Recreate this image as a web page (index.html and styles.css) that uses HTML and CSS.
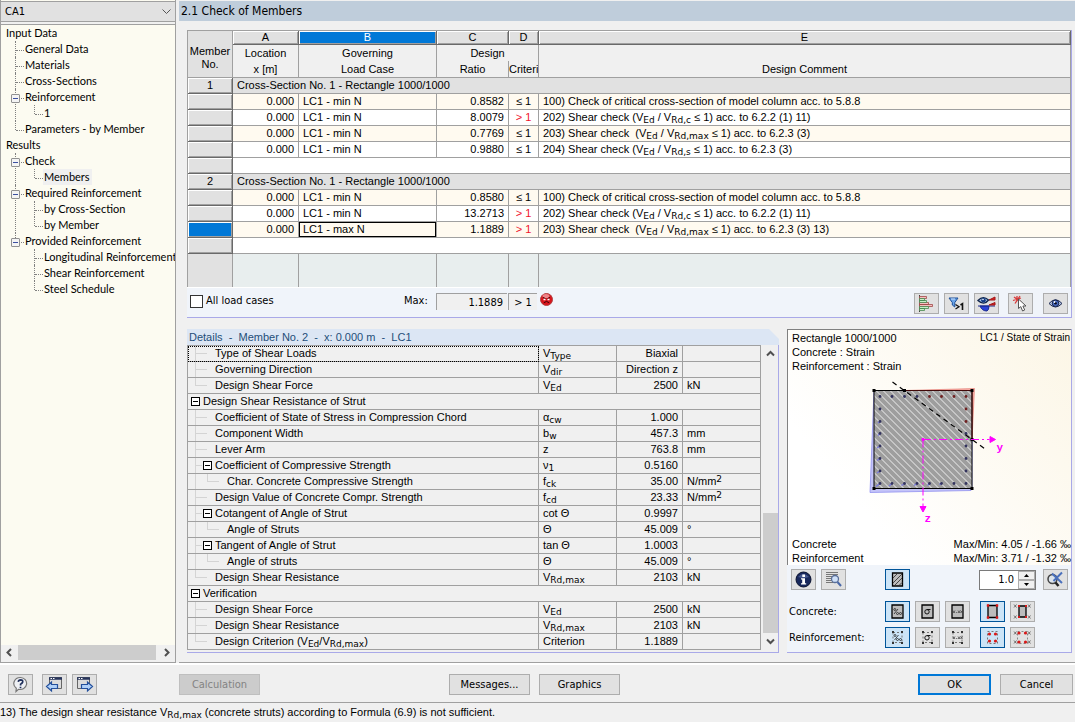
FILE: index.html
```
<!-- index.html -->
<!DOCTYPE html>
<html lang="en">
  <head>
    <meta charset="utf-8" />
    <title>2.1 Check of Members</title>
    <link rel="stylesheet" href="styles.css" />
  </head>
  <body>
    <div class="workspace">
      <aside class="sidebar">
        <div class="case-select">
          <select aria-label="Design case">
            <option>CA1</option>
          </select>
          <svg class="chevron" width="9" height="6" viewBox="0 0 9 6"><path d="M0.5 0.5 L4.5 4.5 L8.5 0.5" fill="none" stroke="#555" /></svg>
        </div>
        <nav class="tree">
          <ul class="tree-root">
            <li>
              <a href="#">Input Data</a>
              <ul>
                <li><a href="#">General Data</a></li>
                <li><a href="#">Materials</a></li>
                <li><a href="#">Cross-Sections</a></li>
                <li>
                  <button class="toggle" aria-label="Collapse"></button><a href="#">Reinforcement</a>
                  <ul>
                    <li><a href="#">1</a></li>
                  </ul>
                </li>
                <li><a href="#">Parameters - by Member</a></li>
              </ul>
            </li>
            <li>
              <a href="#">Results</a>
              <ul>
                <li>
                  <button class="toggle" aria-label="Collapse"></button><a href="#">Check</a>
                  <ul>
                    <li><a class="selected" href="#">Members</a></li>
                  </ul>
                </li>
                <li>
                  <button class="toggle" aria-label="Collapse"></button><a href="#">Required Reinforcement</a>
                  <ul>
                    <li><a href="#">by Cross-Section</a></li>
                    <li><a href="#">by Member</a></li>
                  </ul>
                </li>
                <li>
                  <button class="toggle" aria-label="Collapse"></button><a href="#">Provided Reinforcement</a>
                  <ul>
                    <li><a href="#">Longitudinal Reinforcement</a></li>
                    <li><a href="#">Shear Reinforcement</a></li>
                    <li><a href="#">Steel Schedule</a></li>
                  </ul>
                </li>
              </ul>
            </li>
          </ul>
        </nav>
        <div class="hscroll">
          <button aria-label="Scroll left"><svg width="7" height="9" viewBox="0 0 7 9"><path d="M5 1 L1.5 4.5 L5 8" fill="none" stroke="#505050" stroke-width="2" /></svg></button>
          <div class="hthumb"></div>
          <button aria-label="Scroll right"><svg width="7" height="9" viewBox="0 0 7 9"><path d="M2 1 L5.5 4.5 L2 8" fill="none" stroke="#505050" stroke-width="2" /></svg></button>
        </div>
      </aside>

      <main class="main">
        <h1 class="title">2.1 Check of Members</h1>
        <div class="content">
          <section class="card">
            <table class="members">
              <colgroup>
                <col class="c-no" />
                <col class="c-a" />
                <col class="c-b" />
                <col class="c-c" />
                <col class="c-d" />
                <col />
              </colgroup>
              <thead>
                <tr class="letters">
                  <th class="corner" rowspan="3">Member<br />No.</th>
                  <th>A</th>
                  <th class="active">B</th>
                  <th>C</th>
                  <th>D</th>
                  <th>E</th>
                </tr>
                <tr class="top">
                  <th>Location</th>
                  <th>Governing</th>
                  <th colspan="2">Design</th>
                  <th></th>
                </tr>
                <tr class="names">
                  <th>x [m]</th>
                  <th>Load Case</th>
                  <th>Ratio</th>
                  <th>Criteri</th>
                  <th>Design Comment</th>
                </tr>
              </thead>
              <tbody>
                <tr class="group">
                  <th>1</th>
                  <td colspan="5">Cross-Section No. 1 - Rectangle 1000/1000</td>
                </tr>
                <tr class="odd">
                  <th></th>
                  <td class="num">0.000</td>
                  <td>LC1 - min N</td>
                  <td class="num">0.8582</td>
                  <td class="crit">≤ 1</td>
                  <td>100) Check of critical cross-section of model column acc. to 5.8.8</td>
                </tr>
                <tr>
                  <th></th>
                  <td class="num">0.000</td>
                  <td>LC1 - min N</td>
                  <td class="num">8.0079</td>
                  <td class="crit bad">&gt; 1</td>
                  <td>202) Shear check (V<sub>Ed</sub> / V<sub>Rd,c</sub> ≤ 1) acc. to 6.2.2 (1) 11)</td>
                </tr>
                <tr class="odd">
                  <th></th>
                  <td class="num">0.000</td>
                  <td>LC1 - min N</td>
                  <td class="num">0.7769</td>
                  <td class="crit">≤ 1</td>
                  <td>203) Shear check &nbsp;(V<sub>Ed</sub> / V<sub>Rd,max</sub> ≤ 1) acc. to 6.2.3 (3)</td>
                </tr>
                <tr>
                  <th></th>
                  <td class="num">0.000</td>
                  <td>LC1 - min N</td>
                  <td class="num">0.9880</td>
                  <td class="crit">≤ 1</td>
                  <td>204) Shear check (V<sub>Ed</sub> / V<sub>Rd,s</sub> ≤ 1) acc. to 6.2.3 (3)</td>
                </tr>
                <tr>
                  <th></th>
                  <td colspan="5"></td>
                </tr>
                <tr class="group">
                  <th>2</th>
                  <td colspan="5">Cross-Section No. 1 - Rectangle 1000/1000</td>
                </tr>
                <tr class="odd">
                  <th></th>
                  <td class="num">0.000</td>
                  <td>LC1 - min N</td>
                  <td class="num">0.8580</td>
                  <td class="crit">≤ 1</td>
                  <td>100) Check of critical cross-section of model column acc. to 5.8.8</td>
                </tr>
                <tr>
                  <th></th>
                  <td class="num">0.000</td>
                  <td>LC1 - min N</td>
                  <td class="num">13.2713</td>
                  <td class="crit bad">&gt; 1</td>
                  <td>202) Shear check (V<sub>Ed</sub> / V<sub>Rd,c</sub> ≤ 1) acc. to 6.2.2 (1) 11)</td>
                </tr>
                <tr class="odd">
                  <th class="active"></th>
                  <td class="num">0.000</td>
                  <td class="focused">LC1 - max N</td>
                  <td class="num">1.1889</td>
                  <td class="crit bad">&gt; 1</td>
                  <td>203) Shear check &nbsp;(V<sub>Ed</sub> / V<sub>Rd,max</sub> ≤ 1) acc. to 6.2.3 (3) 13)</td>
                </tr>
                <tr>
                  <th></th>
                  <td colspan="5"></td>
                </tr>
                <tr class="filler">
                  <td></td>
                  <td></td>
                  <td></td>
                  <td></td>
                  <td></td>
                  <td></td>
                </tr>
              </tbody>
            </table>
            <div class="summary">
              <label class="check"><input type="checkbox" />All load cases</label>
              <label class="max-label" for="maxRatio">Max:</label>
              <input class="field max-field" id="maxRatio" type="text" value="1.1889" readonly />
              <input class="field crit-field" type="text" value="&gt; 1" aria-label="Criterion" readonly />
              <svg class="sad" width="13" height="13" viewBox="0 0 13 13">
                <circle cx="6.5" cy="6.5" r="6" fill="#d8141c" stroke="#b04040" />
                <ellipse cx="6" cy="3" rx="3.5" ry="2" fill="#ee8488" />
                <path d="M3 4.5 L5.5 5.5 M10 4.5 L7.5 5.5 M3.8 9.8 Q6.5 7 9.2 9.8" fill="none" stroke="#3a0508" />
                <path d="M3.5 6.5h2M7.5 6.5h2" stroke="#fff" stroke-width="1.5" />
              </svg>
              <div class="tools">
                <button class="icon-btn" aria-label="Result diagrams">
                  <svg width="17" height="17" viewBox="0 0 17 17">
                    <path d="M1.5 0v17" stroke="#444" />
                    <g fill="#f6c0c0" stroke="#a04848" stroke-width="0.8"><path d="M1.5 1.5h7v2h-7zM1.5 7.5h9v2h-9zM1.5 9.5h13v2h-13z" /></g>
                    <g fill="#c6f0c8" stroke="#4a8850" stroke-width="0.8"><path d="M1.5 3.5h5v2h-5zM1.5 5.5h7v2h-7zM1.5 11.5h9v2h-9zM1.5 13.5h5v2h-5z" /></g>
                  </svg>
                </button>
                <button class="icon-btn" aria-label="Filter ratio above 1">
                  <svg width="17" height="17" viewBox="0 0 17 17">
                    <path d="M1 3h9L6.8 7.5V12L4.3 10V7.5z" fill="#6aa4e8" stroke="#1c4f98" />
                    <path d="M3 4h4" stroke="#cfe4ff" />
                    <path d="M7.5 9.5L11 11.8L7.5 14" fill="none" stroke="#111" stroke-width="1.3" />
                    <path d="M12.5 10L14.5 8.7V15" fill="none" stroke="#111" stroke-width="1.6" />
                  </svg>
                </button>
                <button class="icon-btn" aria-label="Show results">
                  <svg width="19" height="17" viewBox="0 0 19 17">
                    <path d="M1 11h17M3 11Q5 16 10 16Q12 15 12 11z" fill="#2b42d8" stroke="#1a2a90" />
                    <path d="M12 5L18 2V5zM12 10L18 7.5V10z" fill="#e02020" stroke="#a01818" />
                    <path d="M1 5.5Q6 0 11.5 5Q7 11 1 5.5z" fill="#a9c8ec" stroke="#12264c" stroke-width="1.4" />
                    <circle cx="6.5" cy="5.3" r="2.3" fill="#123a84" />
                    <circle cx="6" cy="4.5" r="0.8" fill="#fff" />
                  </svg>
                </button>
                <button class="icon-btn pick" aria-label="Pick member">
                  <svg width="17" height="17" viewBox="0 0 17 17">
                    <path d="M2 2L9 7M1 5.5L9 3M8 1L3 8.5M5 1V6" stroke="#d83a3a" stroke-width="1.3" />
                    <path d="M6.5 4V13.5L8.8 11.6L10.6 16L12.7 15L10.9 11H14z" fill="#fff" stroke="#555" />
                  </svg>
                </button>
                <button class="icon-btn view-btn" aria-label="View mode">
                  <svg width="15" height="11" viewBox="0 0 15 11">
                    <path d="M1 5.5Q7.5 -2 14 5.5Q7.5 12.5 1 5.5z" fill="#b4c4e4" stroke="#1c2850" />
                    <circle cx="7.5" cy="5.3" r="3.3" fill="#4a6cc4" stroke="#14224a" />
                    <circle cx="7.5" cy="5.3" r="1.3" fill="#05081a" />
                    <circle cx="6.5" cy="4" r="0.9" fill="#fff" />
                  </svg>
                </button>
              </div>
            </div>
          </section>

          <div class="lower">
            <section class="details">
              <h2 class="details-title">Details &nbsp;- &nbsp;Member No. 2 &nbsp;- &nbsp;x: 0.000 m &nbsp;- &nbsp;LC1</h2>
              <div class="details-body">
                <table class="props">
                  <colgroup>
                    <col />
                    <col class="p-sym" />
                    <col class="p-val" />
                    <col class="p-unit" />
                  </colgroup>
                  <tbody>
                    <tr class="current"><td><div><i class="g mid"></i><i class="g end"></i>Type of Shear Loads</div></td><td>V<sub>Type</sub></td><td>Biaxial</td><td></td></tr>
                    <tr><td><div><i class="g mid"></i><i class="g end"></i>Governing Direction</div></td><td>V<sub>dir</sub></td><td>Direction z</td><td></td></tr>
                    <tr><td><div><i class="g last"></i><i class="g end"></i>Design Shear Force</div></td><td>V<sub>Ed</sub></td><td>2500</td><td>kN</td></tr>
                    <tr><td colspan="4"><div><button class="g box" aria-label="Collapse"></button>Design Shear Resistance of Strut</div></td></tr>
                    <tr><td><div><i class="g mid"></i><i class="g end"></i>Coefficient of State of Stress in Compression Chord</div></td><td>α<sub>cw</sub></td><td>1.000</td><td></td></tr>
                    <tr><td><div><i class="g mid"></i><i class="g end"></i>Component Width</div></td><td>b<sub>w</sub></td><td>457.3</td><td>mm</td></tr>
                    <tr><td><div><i class="g mid"></i><i class="g end"></i>Lever Arm</div></td><td>z</td><td>763.8</td><td>mm</td></tr>
                    <tr><td><div><i class="g mid"></i><button class="g box" aria-label="Collapse"></button>Coefficient of Compressive Strength</div></td><td>ν<sub>1</sub></td><td>0.5160</td><td></td></tr>
                    <tr><td><div><i class="g bar"></i><i class="g last"></i><i class="g end"></i>Char. Concrete Compressive Strength</div></td><td>f<sub>ck</sub></td><td>35.00</td><td>N/mm<sup>2</sup></td></tr>
                    <tr><td><div><i class="g mid"></i><i class="g end"></i>Design Value of Concrete Compr. Strength</div></td><td>f<sub>cd</sub></td><td>23.33</td><td>N/mm<sup>2</sup></td></tr>
                    <tr><td><div><i class="g mid"></i><button class="g box" aria-label="Collapse"></button>Cotangent of Angle of Strut</div></td><td>cot Θ</td><td>0.9997</td><td></td></tr>
                    <tr><td><div><i class="g bar"></i><i class="g last"></i><i class="g end"></i>Angle of Struts</div></td><td>Θ</td><td>45.009</td><td>°</td></tr>
                    <tr><td><div><i class="g mid"></i><button class="g box" aria-label="Collapse"></button>Tangent of Angle of Strut</div></td><td>tan Θ</td><td>1.0003</td><td></td></tr>
                    <tr><td><div><i class="g bar"></i><i class="g last"></i><i class="g end"></i>Angle of struts</div></td><td>Θ</td><td>45.009</td><td>°</td></tr>
                    <tr><td><div><i class="g last"></i><i class="g end"></i>Design Shear Resistance</div></td><td>V<sub>Rd,max</sub></td><td>2103</td><td>kN</td></tr>
                    <tr><td colspan="4"><div><button class="g box" aria-label="Collapse"></button>Verification</div></td></tr>
                    <tr><td><div><i class="g mid"></i><i class="g end"></i>Design Shear Force</div></td><td>V<sub>Ed</sub></td><td>2500</td><td>kN</td></tr>
                    <tr><td><div><i class="g mid"></i><i class="g end"></i>Design Shear Resistance</div></td><td>V<sub>Rd,max</sub></td><td>2103</td><td>kN</td></tr>
                    <tr><td><div><i class="g last"></i><i class="g end"></i><span>Design Criterion (V<sub>Ed</sub>/V<sub>Rd,max</sub>)</span></div></td><td>Criterion</td><td>1.1889</td><td></td></tr>
                  </tbody>
                </table>
                <div class="vscroll">
                  <button aria-label="Scroll up"><svg width="9" height="7" viewBox="0 0 9 7"><path d="M1 5.5 L4.5 2 L8 5.5" fill="none" stroke="#505050" stroke-width="2" /></svg></button>
                  <div class="vthumb"></div>
                  <button aria-label="Scroll down"><svg width="9" height="7" viewBox="0 0 9 7"><path d="M1 1.5 L4.5 5 L8 1.5" fill="none" stroke="#505050" stroke-width="2" /></svg></button>
                </div>
              </div>
            </section>

            <section class="graphic">
              <div class="view">
                <div class="view-head">
                  <div>Rectangle 1000/1000<br />Concrete : Strain<br />Reinforcement : Strain</div>
                  <div class="small">LC1 / State of Strain</div>
                </div>
                <svg class="section" viewBox="0 0 282 164">
                  <defs>
                    <pattern id="hatch" width="7" height="7" patternUnits="userSpaceOnUse">
                      <rect width="7" height="7" fill="#9e9e9e" />
                      <path d="M-1 -1L8 8M6 -1L8 1M-1 6L1 8" stroke="#eee" />
                    </pattern>
                  </defs>
                  <path d="M116 17.5H85.5L81.5 119.5L182.5 117.5L183.5 66.5V115.5H85.5" fill="#c4c4f8" stroke="#9090f0" stroke-width="0.8" />
                  <path d="M116 17.5L186 15.5L183.5 66.5V17.5z" fill="#f8b0a8" stroke="#e07068" stroke-width="0.6" />
                  <rect x="85.5" y="17.5" width="98" height="98" fill="url(#hatch)" stroke="#000" />
                  <path d="M116 17.5H183.5V66.5" fill="none" stroke="#400808" />
                  <g stroke="#7c7ce0" stroke-width="1.5">
                    <path d="M91.5 48.5l-2 1.5M91.5 60.5l-2 2M91.5 73l-3 2M91.5 85.5l-3 2M91.5 98l-3 2M91.5 110.5l-4 3M103.5 110.5l-3 2.5M116 110.5l-3 2M128.5 110.5l-3 2M141 110.5l-2 2M153 110.5l-2 1" />
                  </g>
                  <!-- reinforcement bars -->
                  <g fill="#33335e">
                    <circle cx="91.5" cy="23.5" r="1.4" /><circle cx="103.5" cy="23.5" r="1.4" /><circle cx="116" cy="23.5" r="1.4" /><circle cx="128.5" cy="23.5" r="1.4" />
                    <circle cx="91.5" cy="36" r="1.4" /><circle cx="91.5" cy="48.5" r="1.4" /><circle cx="91.5" cy="60.5" r="1.4" /><circle cx="91.5" cy="73" r="1.4" /><circle cx="91.5" cy="85.5" r="1.4" /><circle cx="91.5" cy="98" r="1.4" />
                    <circle cx="91.5" cy="110.5" r="1.4" /><circle cx="103.5" cy="110.5" r="1.4" /><circle cx="116" cy="110.5" r="1.4" /><circle cx="128.5" cy="110.5" r="1.4" /><circle cx="141" cy="110.5" r="1.4" /><circle cx="153" cy="110.5" r="1.4" /><circle cx="165.5" cy="110.5" r="1.4" /><circle cx="177.5" cy="110.5" r="1.4" />
                    <circle cx="177.5" cy="60.5" r="1.4" /><circle cx="177.5" cy="73" r="1.4" /><circle cx="177.5" cy="85.5" r="1.4" /><circle cx="177.5" cy="98" r="1.4" />
                  </g>
                  <g fill="#702020">
                    <circle cx="141" cy="23.5" r="1.4" /><circle cx="153" cy="23.5" r="1.4" /><circle cx="165.5" cy="23.5" r="1.4" /><circle cx="177.5" cy="23.5" r="1.4" /><circle cx="177.5" cy="36" r="1.4" /><circle cx="177.5" cy="48.5" r="1.4" />
                  </g>
                  <path d="M84 16h3v3h-3zM182 16h3v3h-3zM84 114h3v3h-3zM182 114h3v3h-3zM114.5 16h3v3h-3zM182 65h3v3h-3z" />
                  <path d="M104 9L198 77" stroke="#000" stroke-width="1.2" stroke-dasharray="5 4" />
                  <g stroke="#f0f" fill="#f0f">
                    <path d="M134.5 66.5H201M134.5 66.5V133" stroke-dasharray="8 3 2 3" />
                    <path d="M201.5 63.5V69.5L207 66.5zM131.5 133.5H137.5L134.5 139z" />
                    <path d="M133.5 65.5h2v2h-2z" />
                  </g>
                  <text x="208" y="78">y</text>
                  <text x="136" y="149">z</text>
                </svg>
                <div class="view-foot">
                  <div>Concrete<br />Reinforcement</div>
                  <div>Max/Min: 4.05 / -1.66 ‰<br />Max/Min: 3.71 / -1.32 ‰</div>
                </div>
              </div>
              <div class="controls">
                <div class="control-row first">
                  <div class="lead">
                    <button class="icon-btn" aria-label="Info">
                      <svg width="17" height="17" viewBox="0 0 17 17">
                        <circle cx="8.5" cy="8.5" r="7.5" fill="#18285c" stroke="#0a1230" />
                        <path d="M3 6Q8.5 0 14 6Q8.5 8 3 6z" fill="#5a6ca4" opacity="0.7" />
                        <path d="M7.3 3.5h2.7v2.5h-2.7zM6 7.2h4v5h1.2v1.3H6v-1.3h1.2v-3.7H6z" fill="#fff" />
                      </svg>
                    </button>
                    <button class="icon-btn" aria-label="Find in list">
                      <svg width="19" height="17" viewBox="0 0 19 17">
                        <path d="M2 1.5h12M2 3.5h12M2 5.5h6M2 7.5h5M2 9.5h6M2 11.5h7" stroke="#777" />
                        <circle cx="11" cy="8" r="3.5" fill="#cfe0f8" stroke="#5a6f98" stroke-width="1.3" />
                        <path d="M13.5 11L17 15" stroke="#4a68a8" stroke-width="2" />
                      </svg>
                    </button>
                  </div>
                  <button class="icon-btn on" aria-label="Hatching">
                    <svg width="15" height="15" viewBox="0 0 15 15">
                      <path d="M2.5 1h10v13h-10z" fill="#bcbcbc" stroke="#000" stroke-width="1.3" />
                      <path d="M3 6L7 2M3 11L12 2M5 13L12 6M9.5 13L12 10.5" stroke="#444" />
                    </svg>
                  </button>
                  <div class="spinner">
                    <input type="text" value="1.0" aria-label="Scale" />
                    <div class="spin-btns">
                      <button aria-label="Increase"><svg width="5" height="3" viewBox="0 0 5 3"><path d="M0 3L2.5 0L5 3z" /></svg></button>
                      <button aria-label="Decrease"><svg width="5" height="3" viewBox="0 0 5 3"><path d="M0 0L2.5 3L5 0z" /></svg></button>
                    </div>
                  </div>
                  <button class="icon-btn zoom-btn" aria-label="Reset zoom">
                    <svg width="19" height="17" viewBox="0 0 19 17">
                      <circle cx="6.5" cy="8" r="4.5" fill="#dce4ec" stroke="#444" stroke-width="1.5" />
                      <path d="M9.5 11.5L12.5 15" stroke="#222" stroke-width="2.5" />
                      <path d="M6 2.5L16 12M16 1.5L7.5 10" stroke="#4a70bc" stroke-width="2" />
                    </svg>
                  </button>
                </div>

                <div class="control-row">
                  <div class="lead">Concrete:</div>
                  <button class="icon-btn on" aria-label="Concrete strain">
                    <svg width="15" height="15" viewBox="0 0 15 15">
                      <path d="M2 1h11v13H2z" fill="#bcbcbc" stroke="#000" stroke-width="1.3" />
                      <circle cx="4.8" cy="5.5" r="1" fill="none" stroke="#222" stroke-width="0.8" /><circle cx="7.5" cy="9.5" r="1" fill="none" stroke="#222" stroke-width="0.8" /><circle cx="10.5" cy="9.5" r="1" fill="none" stroke="#222" stroke-width="0.8" />
                      <path d="M4 10L8 5" stroke="#222" stroke-width="0.8" />
                    </svg>
                  </button>
                  <button class="icon-btn" aria-label="Concrete stress">
                    <svg width="15" height="15" viewBox="0 0 15 15">
                      <path d="M2 1h11v13H2z" fill="#bcbcbc" stroke="#000" stroke-width="1.3" />
                      <path d="M7 5.5H10.5" stroke="#111" /><circle cx="7" cy="7.8" r="2.2" fill="none" stroke="#111" />
                    </svg>
                  </button>
                  <button class="icon-btn" aria-label="Concrete values">
                    <svg width="15" height="15" viewBox="0 0 15 15">
                      <path d="M2 1h11v13H2z" fill="#bcbcbc" stroke="#000" stroke-width="1.3" />
                      <path d="M3 6.5l2 2.5M5 6.5L3 9M6.2 8.5h1M8 6.5l2 2.5M10 6.5L8 9M10.5 6.5l2 2.5M12.5 6.5l-2 2.5" stroke="#444" stroke-width="0.8" />
                    </svg>
                  </button>
                  <button class="icon-btn on wide-gap" aria-label="Concrete corner points">
                    <svg width="15" height="17" viewBox="0 0 15 17">
                      <path d="M3 2.5h9v12H3z" fill="#bcbcbc" stroke="#000" stroke-width="1.3" />
                      <path d="M2 1.5h2v2H2zM11 1.5h2v2h-2zM2 13.5h2v2H2zM11 13.5h2v2h-2z" fill="#d81818" stroke="#d81818" stroke-width="0.5" />
                    </svg>
                  </button>
                  <button class="icon-btn" aria-label="Concrete corner values">
                    <svg width="19" height="17" viewBox="0 0 19 17">
                      <path d="M6 3h7v11H6z" fill="#bcbcbc" stroke="#000" stroke-width="1.3" />
                      <path d="M5 2h2v2H5zM12 2h2v2h-2zM5 13h2v2H5zM12 13h2v2h-2z" fill="#d81818" />
                      <path d="M1 1.5l2.5 3M3.5 1.5l-2.5 3M15 1.5l2.5 3M17.5 1.5l-2.5 3M1 12.5l2.5 3M3.5 12.5l-2.5 3M15 12.5l2.5 3M17.5 12.5l-2.5 3" stroke="#555" stroke-width="0.8" />
                    </svg>
                  </button>
                </div>

                <div class="control-row">
                  <div class="lead">Reinforcement:</div>
                  <button class="icon-btn on" aria-label="Reinforcement strain">
                    <svg width="15" height="15" viewBox="0 0 15 15">
                      <path d="M3 2.5h9v10H3z" fill="none" stroke="#777" stroke-dasharray="2 2" />
                      <path d="M2 1h2v2H2zM11 1h2v2h-2zM2 12h2v2H2zM11 12h2v2h-2z" fill="#333" />
                      <circle cx="5" cy="5.5" r="1" fill="none" stroke="#222" stroke-width="0.8" /><circle cx="7.5" cy="9.5" r="1" fill="none" stroke="#222" stroke-width="0.8" /><circle cx="10.5" cy="9.5" r="1" fill="none" stroke="#222" stroke-width="0.8" />
                      <path d="M4.5 10L8.5 5" stroke="#222" stroke-width="0.8" />
                    </svg>
                  </button>
                  <button class="icon-btn" aria-label="Reinforcement stress">
                    <svg width="15" height="15" viewBox="0 0 15 15">
                      <path d="M3 2.5h9v10H3z" fill="none" stroke="#777" stroke-dasharray="2 2" />
                      <path d="M2 1h2v2H2zM11 1h2v2h-2zM2 12h2v2H2zM11 12h2v2h-2z" fill="#333" />
                      <path d="M7 5.5H10.5" stroke="#111" /><circle cx="7" cy="7.8" r="2.2" fill="none" stroke="#111" />
                    </svg>
                  </button>
                  <button class="icon-btn" aria-label="Reinforcement values">
                    <svg width="15" height="15" viewBox="0 0 15 15">
                      <path d="M3 2.5h9v10H3z" fill="none" stroke="#777" stroke-dasharray="2 2" />
                      <path d="M2 1h2v2H2zM11 1h2v2h-2zM2 12h2v2H2zM11 12h2v2h-2z" fill="#333" />
                      <path d="M3 6.5l2 2.5M5 6.5L3 9M6.2 8.5h1M8 6.5l2 2.5M10 6.5L8 9M10.5 6.5l2 2.5M12.5 6.5l-2 2.5" stroke="#444" stroke-width="0.8" />
                    </svg>
                  </button>
                  <button class="icon-btn on wide-gap" aria-label="Reinforcement points">
                    <svg width="15" height="17" viewBox="0 0 15 17">
                      <path d="M2.5 2.5h10v12h-10z" fill="none" stroke="#777" stroke-dasharray="2 2" />
                      <circle cx="4.5" cy="5" r="1.6" fill="#d81818" /><circle cx="10.5" cy="5" r="1.6" fill="#d81818" /><circle cx="4.5" cy="12" r="1.6" fill="#d81818" /><circle cx="10.5" cy="12" r="1.6" fill="#d81818" />
                    </svg>
                  </button>
                  <button class="icon-btn" aria-label="Reinforcement point values">
                    <svg width="19" height="17" viewBox="0 0 19 17">
                      <path d="M4.5 2.5h10v12h-10z" fill="none" stroke="#888" stroke-dasharray="2 2" />
                      <circle cx="6" cy="4" r="1.6" fill="#d81818" /><circle cx="12.5" cy="4" r="1.6" fill="#d81818" /><circle cx="6" cy="13" r="1.6" fill="#d81818" /><circle cx="12.5" cy="13" r="1.6" fill="#d81818" />
                      <path d="M1 2.5l2.5 3M3.5 2.5l-2.5 3M15 2.5l2.5 3M17.5 2.5l-2.5 3M1 11.5l2.5 3M3.5 11.5l-2.5 3M15 11.5l2.5 3M17.5 11.5l-2.5 3" stroke="#555" stroke-width="0.8" />
                    </svg>
                  </button>
                </div>
              </div>
            </section>
          </div>
        </div>
      </main>
    </div>

    <footer class="footer">
      <div class="footer-left">
        <button class="icon-btn help" aria-label="Help">
          <svg width="17" height="17" viewBox="0 0 17 17">
            <path d="M8.5 1.5a6.5 6 0 1 1 -2 11.8L4 15.5L4.3 12.2A6.5 6 0 0 1 8.5 1.5z" fill="#eef0f4" stroke="#777" stroke-width="1.2" />
            <path d="M6.3 5.8Q6.5 3.8 8.7 3.8Q11 3.9 10.7 6Q10.4 7.3 8.6 8.2V9.6M8.5 10.8v1.5" fill="none" stroke="#20305c" stroke-width="1.7" />
          </svg>
        </button>
        <button class="icon-btn" aria-label="Previous window">
          <svg width="19" height="17" viewBox="0 0 19 17">
            <path d="M4.5 1.5h12v11h-12z" fill="#dcdcdc" stroke="#666" />
            <path d="M4 2.5h13" stroke="#27345c" stroke-width="2.5" />
            <path d="M5.5 2.5h1.5M8 2.5h1.5" stroke="#fff" />
            <path d="M1.5 10.5L6.5 6V8.5H12.5V12.5H6.5V15z" fill="#b0d0f8" stroke="#24509c" stroke-width="1.2" />
          </svg>
        </button>
        <button class="icon-btn" aria-label="Next window">
          <svg width="19" height="17" viewBox="0 0 19 17">
            <path d="M2.5 1.5h12v11h-12z" fill="#dcdcdc" stroke="#666" />
            <path d="M2 2.5h13" stroke="#27345c" stroke-width="2.5" />
            <path d="M3.5 2.5h1.5M6 2.5h1.5" stroke="#fff" />
            <path d="M17.5 10.5L12.5 6V8.5H6.5V12.5H12.5V15z" fill="#b0d0f8" stroke="#24509c" stroke-width="1.2" />
          </svg>
        </button>
      </div>
      <button class="btn" disabled>Calculation</button>
      <div class="footer-mid">
        <button class="btn">Messages...</button>
        <button class="btn">Graphics</button>
      </div>
      <div class="footer-right">
        <button class="btn short default">OK</button>
        <button class="btn short">Cancel</button>
      </div>
    </footer>
    <div class="status">13) The design shear resistance V<sub>Rd,max</sub> (concrete struts) according to Formula (6.9) is not sufficient.</div>
  </body>
</html>
```
FILE: styles.css
```
* {
  box-sizing: border-box;
}
body {
  margin: 0;
  min-height: 100vh;
  display: flex;
  flex-direction: column;
  background: #f0f0f0;
  color: #000;
  font-family: "DejaVu Sans Condensed", "Noto Sans", sans-serif;
  font-size: 11px;
  line-height: 16px;
}
button,
input,
select {
  margin: 0;
  padding: 0;
  font: inherit;
  color: inherit;
}
svg {
  display: block;
  flex: none;
}
sub,
sup {
  font-family: "DejaVu Sans", sans-serif;
  font-size: 9px;
  line-height: 0;
  vertical-align: -2px;
}
sup {
  vertical-align: 3px;
}
.workspace {
  flex: 1;
  display: flex;
  gap: 3px;
  border-bottom: 2px solid #fff;
}

/* navigator */
.sidebar {
  width: 176px;
  flex: none;
  display: flex;
  flex-direction: column;
  border: solid #a0a0a0;
  border-width: 0 1px 1px;
  background: #fcfbf1;
}
.case-select {
  position: relative;
  padding-top: 1px;
  border-bottom: 2px solid #f0f0f0;
}
.case-select select {
  width: 100%;
  height: 21px;
  padding: 0 4px;
  appearance: none;
  border: solid #a0a0a0;
  border-width: 1px 0;
  border-radius: 0;
  background: #e1e1e1;
}
.chevron {
  position: absolute;
  right: 4px;
  top: 9px;
}
.tree {
  flex: 1;
  padding: 0 0 0 5px;
  border-top: 1px solid #a0a0a0;
  overflow: hidden;
  font-family: Lato, "Noto Sans", sans-serif;
}
.tree ul {
  margin: 0;
  padding: 0 0 0 19px;
  list-style: none;
}
.tree .tree-root {
  padding: 0;
}
.tree li {
  position: relative;
  white-space: nowrap;
}
.tree a {
  display: block;
  width: max-content;
  color: #000;
  text-decoration: none;
}
.tree a.selected {
  margin-left: -1px;
  padding: 0 2px 0 1px;
  background: #f0f0f0;
}
.tree li li::before {
  content: "";
  position: absolute;
  left: -10px;
  top: 0;
  height: 100%;
  border-left: 1px dotted #808080;
}
.tree li li:last-child::before {
  height: 9px;
}
.tree li li::after {
  content: "";
  position: absolute;
  left: -9px;
  top: 9px;
  width: 8px;
  border-top: 1px dotted #808080;
}
.toggle {
  position: absolute;
  z-index: 1;
  left: -14px;
  top: 5px;
  width: 9px;
  height: 9px;
  border: 1px solid #919191;
  border-radius: 1px;
  background: linear-gradient(#3c50a0, #3c50a0) center / 5px 1px no-repeat, #f4f4f4;
}
.hscroll {
  display: flex;
  height: 17px;
  padding-bottom: 2px;
  background: #f0f0f0;
}
.hscroll button,
.vscroll button {
  width: 17px;
  height: 15px;
  display: flex;
  align-items: center;
  justify-content: center;
  border: 0;
  background: none;
}
.hthumb {
  flex: 1;
  margin-right: 2px;
  background: #cdcdcd;
}

/* main window */
.main {
  flex: 1;
  min-width: 0;
  display: flex;
  flex-direction: column;
  padding-top: 1px;
  border-bottom: 1px solid #a0a0a0;
}
.title {
  margin: 0;
  padding-left: 2px;
  height: 20px;
  line-height: 20px;
  background: #bfcddb;
  font-size: 12px;
  font-weight: normal;
}
.content {
  flex: 1;
  display: flex;
  flex-direction: column;
  gap: 11px;
  padding: 9px 3px 9px 8px;
}
.card {
  border: solid #a9a9e8;
  border-width: 0 1px 1px 0;
}
table {
  width: 100%;
  table-layout: fixed;
  border-collapse: separate;
  border-spacing: 0;
  font-family: "Liberation Sans", Arial, sans-serif;
}
th {
  font-weight: normal;
}
td,
th {
  height: 16px;
  padding: 0 4px;
  line-height: 15px;
  border: solid #a0a0a0;
  border-width: 0 1px 1px 0;
  text-align: left;
  white-space: nowrap;
  overflow: hidden;
}
.members {
  border-top: 1px solid #a0a0a0;
  border-left: 1px solid #a0a0a0;
  background: #fff;
}
.c-no {
  width: 45px;
}
.c-a {
  width: 66px;
}
.c-b {
  width: 138px;
}
.c-c {
  width: 72px;
}
.c-d {
  width: 30px;
}
.members th {
  padding: 0;
  text-align: center;
  background: #f0f0f0;
}
.members .letters th,
.members tbody th {
  border-color: #696969;
  background: #e1e1e1;
  box-shadow: inset 1px 1px #fff, inset -1px -1px #a0a0a0;
}
.members .letters th {
  height: 14px;
  line-height: 13px;
}
.members .letters .corner {
  line-height: 13px;
  padding-top: 8px;
  border-color: #a0a0a0;
  box-shadow: none;
}
.members .letters .active,
.members tbody .active {
  background: #0078d7;
  color: #fff;
}
.members .top th {
  border-bottom: 0;
}
.members .names th {
  height: 17px;
}
.members .odd td {
  background: #fffaf0;
}
.members .group td {
  background: #e1e1e1;
}
.members .num {
  text-align: right;
}
.members .crit {
  padding: 0;
  text-align: center;
}
.members .bad {
  color: #f0142d;
}
.members .focused {
  box-shadow: inset 0 0 0 1px #000;
}
.members .filler td {
  height: 33px;
  border-bottom: 0;
  background: #e8eeee;
}
.members .filler td:first-child {
  background: #e1e1e1;
}
.summary {
  display: flex;
  align-items: flex-start;
  height: 30px;
  padding: 5px 3px 0;
  border-top: 1px solid #fff;
  background: #f0f4fa;
}
.check {
  width: 214px;
  display: flex;
  align-items: center;
}
.check input {
  width: 13px;
  height: 13px;
  margin-right: 3px;
  appearance: none;
  border: 1px solid #333;
  background: #fff;
}
.max-label {
  width: 32px;
}
.field {
  height: 17px;
  border: solid #a0a0a0;
  border-width: 1px 0 0 1px;
  background: #f0f0f0;
}
.max-field {
  width: 71px;
  padding-right: 4px;
  text-align: right;
}
.crit-field {
  width: 29px;
  margin: 0 3px 0 1px;
  text-align: center;
}
.tools {
  display: flex;
  gap: 5px;
  margin-left: auto;
}
.icon-btn {
  width: 25px;
  height: 21px;
  flex: none;
  display: flex;
  align-items: center;
  justify-content: center;
  border: 1px solid #adadad;
  background: #e1e1e1;
}
.icon-btn.on {
  border-color: #005499;
  background: #cce4f7;
}
.pick {
  margin-left: 4px;
}
.view-btn {
  margin-left: 5px;
}

/* details */
.lower {
  flex: 1;
  display: flex;
  gap: 8px;
}
.details {
  flex: 1;
  min-width: 0;
  display: flex;
  flex-direction: column;
}
.details-title {
  margin: 0;
  padding-left: 2px;
  height: 16px;
  line-height: 17px;
  background: #dce6f4;
  clip-path: polygon(0 0, calc(100% - 10px) 0, 100% 10px, 100% 100%, 0 100%);
  color: #1f4e79;
  font-family: "Liberation Sans", Arial, sans-serif;
  font-size: 11px;
  font-weight: normal;
}
.details-body {
  flex: 1;
  display: flex;
  align-items: flex-start;
  gap: 2px;
  padding-bottom: 2px;
  border: solid #a9a9e8;
  border-width: 0 1px 1px 0;
}
.props {
  flex: 1;
  border-top: 1px solid #a0a0a0;
  border-left: 1px solid #a0a0a0;
}
.p-sym,
.p-unit {
  width: 78px;
}
.p-val {
  width: 66px;
}
.props td:first-child {
  padding: 0 0 0 2px;
}
.props td:nth-child(3) {
  text-align: right;
}
.props div {
  display: flex;
  height: 15px;
}
.current td:first-child {
  outline: 1px dotted #000;
  outline-offset: -1px;
}
/* guide lines of the property tree, one 12px step per level */
.g {
  width: 12px;
  height: 15px;
  flex: none;
  background-repeat: no-repeat;
  background-image: linear-gradient(#d4d4d4, #d4d4d4), linear-gradient(#d4d4d4, #d4d4d4);
  background-size: 1px 15px, 7px 1px;
  background-position: 5px 0, 5px 7px;
}
.g.last {
  background-size: 1px 8px, 7px 1px;
}
.g.bar {
  background-size: 1px 15px, 0 0;
}
.g.end {
  background-size: 0 0, 5px 1px;
  background-position: 0 0, 0 7px;
  margin-right: 1px;
}
.g.box {
  width: 9px;
  height: 9px;
  margin: 3px 3px 0 1px;
  border: 1px solid #000;
  background: linear-gradient(#000, #000) center / 5px 1px no-repeat, #fff;
}
.vscroll {
  width: 15px;
  align-self: stretch;
  display: flex;
  flex-direction: column;
}
.vscroll button {
  width: 15px;
  height: 17px;
}
.vthumb {
  height: 120px;
  margin-top: auto;
  background: #cdcdcd;
}

/* section graphic */
.graphic {
  width: 285px;
  flex: none;
  display: flex;
  flex-direction: column;
  border: solid #a9a9e8;
  border-width: 0 1px 1px 0;
}
.view {
  flex: 1;
  display: flex;
  flex-direction: column;
  padding-top: 1px;
  border: solid #808080;
  border-width: 1px 0 0 1px;
  background: linear-gradient(50deg, #fff 25%, #fcf6e6);
  font-family: "Liberation Sans", Arial, sans-serif;
  line-height: 14px;
}
.view-head,
.view-foot {
  display: flex;
  justify-content: space-between;
  padding-left: 4px;
}
.small {
  font-size: 10px;
  padding-right: 1px;
}
.section {
  flex: 1 1 0;
  min-height: 0;
  width: 100%;
}
.section text {
  fill: #f0f;
  font-family: "Liberation Mono", monospace;
  font-size: 11px;
  font-weight: bold;
}
.controls {
  padding: 4px 2px;
  background: #f0f4fa;
}
.control-row {
  display: flex;
  align-items: center;
  gap: 5px;
  margin-bottom: 5px;
}
.control-row:last-child {
  margin-bottom: 0;
}
.control-row.first {
  margin-bottom: 11px;
}
.lead {
  width: 91px;
  flex: none;
  display: flex;
  gap: 5px;
}
.first .lead {
  padding-left: 2px;
}
.wide-gap {
  margin-left: 5px;
}
.spinner {
  display: flex;
  width: 57px;
  height: 20px;
  margin-left: auto;
  border: 1px solid #7a7a7a;
  background: #fff;
}
.spinner input {
  width: 38px;
  padding-right: 4px;
  border: 0;
  background: none;
  text-align: right;
}
.spin-btns {
  flex: 1;
  display: flex;
  flex-direction: column;
  background: #f0f0f0;
}
.spin-btns button {
  flex: 1;
  display: flex;
  align-items: center;
  justify-content: center;
  border: 1px solid #adadad;
  background: #f0f0f0;
}
.zoom-btn {
  margin: 0 1px 0 2px;
}

/* bottom buttons */
.footer {
  display: flex;
  align-items: flex-start;
  height: 38px;
  padding: 9px 2px 0 8px;
  border-bottom: 1px solid #a0a0a0;
}
.footer-left {
  width: 171px;
  flex: none;
  display: flex;
  gap: 5px;
}
.help {
  margin-right: 4px;
}
.btn {
  width: 81px;
  height: 21px;
  border: 1px solid #adadad;
  background: #e1e1e1;
}
.btn:disabled {
  border-color: #bfbfbf;
  background: #ccc;
  color: #838383;
}
.btn.short {
  width: 73px;
}
.btn.default {
  border: 2px solid #0078d7;
}
.footer-mid {
  display: flex;
  gap: 9px;
  margin-left: 189px;
}
.footer-right {
  display: flex;
  gap: 9px;
  margin-left: auto;
}
.status {
  height: 19px;
  line-height: 19px;
  font-family: "Liberation Sans", Arial, sans-serif;
}
```
